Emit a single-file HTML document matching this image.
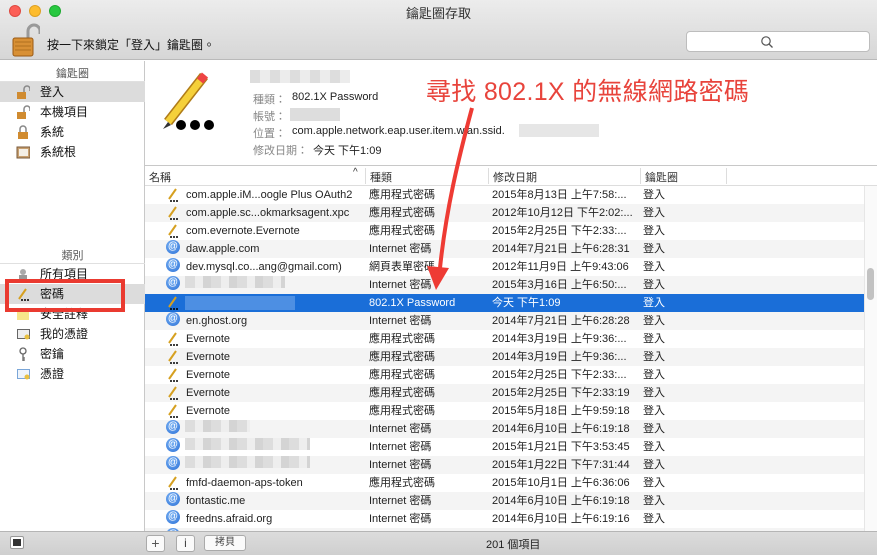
<!DOCTYPE html>
<html><head><meta charset="utf-8"><style>
*{margin:0;padding:0;box-sizing:border-box}
body{width:877px;height:555px;overflow:hidden;font-family:"Liberation Sans","Noto Sans CJK TC",sans-serif;font-size:11px;color:#222;background:#fff;position:relative}
.a{position:absolute}
.tb{left:0;top:0;width:877px;height:60px;background:linear-gradient(#ececec,#d6d6d6);border-bottom:1px solid #b9b9b9}
.dot{width:12px;height:12px;border-radius:50%;top:5px}
.side{left:0;top:61px;width:145px;height:470px;background:#fff;border-right:1px solid #c8c8c8}
.sh{color:#555;text-align:center;width:145px;font-size:11px}
.si{left:0;width:145px;height:20px;line-height:20px;font-size:12px;color:#111}
.si span{position:absolute;left:40px}
.ico{position:absolute;left:16px;top:3px;width:14px;height:14px}
.row{left:145px;width:719px;height:18px;line-height:18px;font-size:11px}
.row div{position:absolute;top:0;white-space:nowrap}
.c1{left:41px}.c2{left:224px}.c3{left:347px}.c4{left:498px}
.at{position:absolute;left:21px;top:2px;width:14px;height:14px;border-radius:50%;background:radial-gradient(circle at 40% 35%,#7cb4f5,#2a6fd6);color:#fff;font-size:10px;line-height:14px;text-align:center}
.blur{position:absolute;left:40px;top:3px;height:12px;background:repeating-linear-gradient(90deg,#ddd 0 10px,#eee 10px 18px,#d4d4d4 18px 26px)}
.ch{color:#333}
</style></head><body>
<div class="a tb"></div>
<div class="a dot" style="left:9px;background:#fc5f57;border:1px solid #de4a42"></div>
<div class="a dot" style="left:29px;background:#fdbc2e;border:1px solid #dea124"></div>
<div class="a dot" style="left:49px;background:#28c840;border:1px solid #1eaa30"></div>
<div class="a" style="left:0;top:3px;width:877px;text-align:center;font-size:13px;color:#333">鑰匙圈存取</div>
<svg class="a" style="left:10px;top:22px" width="30" height="36"><path d="M18 16 V9 a6 6 0 0 1 12 0 V12" fill="none" stroke="#999" stroke-width="3"/><rect x="3" y="16" width="20" height="18" rx="2" fill="#d89035" stroke="#9a5a14"/><path d="M5 20h16M5 24h16M5 28h16" stroke="#b0701f"/></svg>
<div class="a" style="left:47px;top:36px;font-size:12px;color:#111">按一下來鎖定「登入」鑰匙圈。</div>
<div class="a" style="left:686px;top:31px;width:184px;height:21px;background:#fff;border:1px solid #bdbdbd;border-radius:4px"></div>
<svg class="a" style="left:760px;top:35px" width="14" height="14"><circle cx="6" cy="6" r="4.2" fill="none" stroke="#555" stroke-width="1.2"/><path d="M9 9l3.5 3.5" stroke="#555" stroke-width="1.3"/></svg>

<div class="a side"></div>
<div class="a sh" style="top:65px">鑰匙圈</div>
<div class="a" style="left:0;top:81px;width:145px;border-top:1px solid #e0e0e0"></div>
<div class="a si" style="top:82px;background:#dcdcdc"><svg class="ico"><path d="M8 7V4a3 3 0 0 1 6 0v2" fill="none" stroke="#888" stroke-width="1.5"/><rect x="1" y="7" width="9" height="7" fill="#d08b30"/></svg><span>登入</span></div>
<div class="a si" style="top:102px"><svg class="ico"><path d="M8 7V4a3 3 0 0 1 6 0v2" fill="none" stroke="#888" stroke-width="1.5"/><rect x="1" y="7" width="9" height="7" fill="#d08b30"/></svg><span>本機項目</span></div>
<div class="a si" style="top:122px"><svg class="ico"><path d="M4 7V4a3 3 0 0 1 6 0v3" fill="none" stroke="#888" stroke-width="1.5"/><rect x="2" y="7" width="10" height="7" fill="#d08b30"/></svg><span>系統</span></div>
<div class="a si" style="top:142px"><svg class="ico"><rect x="1" y="2" width="13" height="11" fill="#c8a070" stroke="#7a5a3a"/><rect x="3" y="4" width="9" height="7" fill="#f4efe6"/></svg><span>系統根</span></div>
<div class="a sh" style="top:247px">類別</div>
<div class="a" style="left:0;top:263px;width:145px;border-top:1px solid #e0e0e0"></div>
<div class="a si" style="top:264px"><svg class="ico"><circle cx="7" cy="5" r="3" fill="#aaa"/><rect x="3" y="8" width="8" height="6" fill="#999"/></svg><span>所有項目</span></div>
<div class="a si" style="top:284px;background:#dcdcdc"><svg class="ico"><path d="M3 12L10 2" stroke="#d6a020" stroke-width="2"/><circle cx="6" cy="13" r="1" fill="#000"/><circle cx="9" cy="13" r="1" fill="#000"/><circle cx="12" cy="13" r="1" fill="#000"/></svg><span>密碼</span></div>
<div class="a si" style="top:304px"><svg class="ico"><rect x="1" y="2" width="12" height="11" fill="#f7e58a"/></svg><span>安全註釋</span></div>
<div class="a si" style="top:324px"><svg class="ico"><rect x="1" y="2" width="13" height="10" fill="#666"/><rect x="2" y="3" width="11" height="8" fill="#eee"/><circle cx="11" cy="10" r="2.5" fill="#e8c040"/></svg><span>我的憑證</span></div>
<div class="a si" style="top:344px"><svg class="ico"><circle cx="7" cy="4" r="3" fill="none" stroke="#666" stroke-width="1.3"/><path d="M7 7v7M7 11h2M7 13h2" stroke="#666" stroke-width="1.3"/></svg><span>密鑰</span></div>
<div class="a si" style="top:364px"><svg class="ico"><rect x="1" y="2" width="13" height="10" fill="#7aa6d8"/><rect x="2" y="3" width="11" height="8" fill="#eef4fb"/><circle cx="11" cy="10" r="2.5" fill="#e8c040"/></svg><span>憑證</span></div>
<div class="a" style="left:5px;top:279px;width:120px;height:33px;border:4px solid #ea3a30"></div>

<svg class="a" style="left:160px;top:72px" width="60" height="62"><path d="M8 50 L44 4" stroke="#b07c18" stroke-width="10" stroke-linecap="butt"/><path d="M8 50 L44 4" stroke="#f5d03a" stroke-width="7"/><path d="M40 9 L45 3" stroke="#e44" stroke-width="8"/><path d="M3 57 L8 50 L11 53Z" fill="#333"/><circle cx="21" cy="53" r="5" fill="#000"/><circle cx="35" cy="53" r="5" fill="#000"/><circle cx="49" cy="53" r="5" fill="#000"/></svg>
<div class="a" style="left:250px;top:70px;width:100px;height:13px;background:repeating-linear-gradient(90deg,#ddd 0 10px,#ececec 10px 20px)"></div>
<div class="a" style="left:253px;top:91px;color:#888">種類：</div><div class="a" style="left:292px;top:91px">802.1X Password</div>
<div class="a" style="left:253px;top:108px;color:#888">帳號：</div><div class="a" style="left:290px;top:108px;width:50px;height:13px;background:#ddd"></div>
<div class="a" style="left:253px;top:125px;color:#888">位置：</div><div class="a" style="left:292px;top:125px">com.apple.network.eap.user.item.wlan.ssid.</div><div class="a" style="left:519px;top:124px;width:80px;height:13px;background:#e6e6e6"></div>
<div class="a" style="left:253px;top:142px;color:#888">修改日期：</div><div class="a" style="left:313px;top:142px">今天 下午1:09</div>
<div class="a" style="left:426px;top:72px;font-size:25px;color:#e8443c;letter-spacing:0.3px">尋找 802.1X 的無線網路密碼</div>

<div class="a" style="left:145px;top:165px;width:732px;height:21px;border-top:1px solid #c8c8c8;border-bottom:1px solid #ddd;background:#fff"></div>
<div class="a ch" style="left:149px;top:169px">名稱</div><div class="a ch" style="left:353px;top:167px;font-size:10px">^</div>
<div class="a ch" style="left:370px;top:169px">種類</div>
<div class="a ch" style="left:493px;top:169px">修改日期</div>
<div class="a ch" style="left:645px;top:169px">鑰匙圈</div>
<div class="a" style="left:365px;top:168px;height:16px;border-left:1px solid #ddd"></div>
<div class="a" style="left:488px;top:168px;height:16px;border-left:1px solid #ddd"></div>
<div class="a" style="left:640px;top:168px;height:16px;border-left:1px solid #ddd"></div>
<div class="a" style="left:726px;top:168px;height:16px;border-left:1px solid #ddd"></div>

<div id="rows"></div>
<script>
var P='<svg style="position:absolute;left:21px;top:2px" width="14" height="14"><path d="M3 11L10 1" stroke="#d6a020" stroke-width="2"/><circle cx="5" cy="13" r="1" fill="#000"/><circle cx="8" cy="13" r="1" fill="#000"/><circle cx="11" cy="13" r="1" fill="#000"/></svg>';
var A='<div class="at">@</div>';
var d=[[P,'com.apple.iM...oogle Plus OAuth2','應用程式密碼','2015年8月13日 上午7:58:...'],
[P,'com.apple.sc...okmarksagent.xpc','應用程式密碼','2012年10月12日 下午2:02:...'],
[P,'com.evernote.Evernote','應用程式密碼','2015年2月25日 下午2:33:...'],
[A,'daw.apple.com','Internet 密碼','2014年7月21日 上午6:28:31'],
[A,'dev.mysql.co...ang@gmail.com)','網頁表單密碼','2012年11月9日 上午9:43:06'],
[A,'#100','Internet 密碼','2015年3月16日 上午6:50:...'],
[P,'#sel','802.1X Password','今天 下午1:09'],
[A,'en.ghost.org','Internet 密碼','2014年7月21日 上午6:28:28'],
[P,'Evernote','應用程式密碼','2014年3月19日 上午9:36:...'],
[P,'Evernote','應用程式密碼','2014年3月19日 上午9:36:...'],
[P,'Evernote','應用程式密碼','2015年2月25日 下午2:33:...'],
[P,'Evernote','應用程式密碼','2015年2月25日 下午2:33:19'],
[P,'Evernote','應用程式密碼','2015年5月18日 上午9:59:18'],
[A,'#65','Internet 密碼','2014年6月10日 上午6:19:18'],
[A,'#125','Internet 密碼','2015年1月21日 下午3:53:45'],
[A,'#125','Internet 密碼','2015年1月22日 下午7:31:44'],
[P,'fmfd-daemon-aps-token','應用程式密碼','2015年10月1日 上午6:36:06'],
[A,'fontastic.me','Internet 密碼','2014年6月10日 上午6:19:18'],
[A,'freedns.afraid.org','Internet 密碼','2014年6月10日 上午6:19:16'],
[A,'','','']];
var h='';
d.forEach(function(r,i){var y=186+18*i,sel=r[1]=='#sel';
var bg=sel?'#1a6ed8':(i%2?'#f4f4f4':'#fff');var col=sel?'#fff':'#222';
var name=r[1].charAt(0)=='#'?(sel?'<div style="left:40px;top:2px;width:110px;height:14px;background:#4d8fe3"></div>':'<div class="blur" style="width:'+r[1].slice(1)+'px"></div>'):'<div class="c1">'+r[1]+'</div>';
h+='<div class="a row" style="top:'+y+'px;background:'+bg+';color:'+col+'">'+r[0]+name+'<div class="c2">'+r[2]+'</div><div class="c3">'+r[3]+'</div><div class="c4">'+(r[2]?'登入':'')+'</div></div>';});
document.getElementById('rows').innerHTML=h;
</script>
<div class="a" style="left:864px;top:186px;width:13px;height:345px;background:#fafafa;border-left:1px solid #e6e6e6"></div>
<div class="a" style="left:867px;top:268px;width:7px;height:32px;background:#c2c2c2;border-radius:4px"></div>

<svg class="a" style="left:420px;top:100px" width="70" height="200"><path d="M52 8 C38 60 26 110 20 168" fill="none" stroke="#ee3b34" stroke-width="4"/><path d="M7 166 L29 168 L16 190Z" fill="#ee3b34"/></svg>

<div class="a" style="left:0;top:531px;width:877px;height:24px;background:linear-gradient(#dcdcdc,#cfcfcf);border-top:1px solid #b5b5b5"></div>
<div class="a" style="left:10px;top:536px;width:14px;height:13px;border:1px solid #999;background:#fff;border-radius:2px"><div style="margin:2px auto;width:8px;height:7px;background:#333"></div></div>
<div class="a" style="left:146px;top:535px;width:19px;height:17px;border:1px solid #aaa;background:#fafafa;border-radius:3px;text-align:center;line-height:15px;font-size:14px;color:#555">+</div>
<div class="a" style="left:176px;top:535px;width:19px;height:17px;border:1px solid #aaa;background:#fafafa;border-radius:3px;text-align:center;line-height:15px;font-size:12px;color:#444">i</div>
<div class="a" style="left:204px;top:535px;width:42px;height:16px;border:1px solid #aaa;background:#fafafa;border-radius:3px;text-align:center;line-height:14px;font-size:10px;color:#444">拷貝</div>
<div class="a" style="left:486px;top:536px;font-size:11px;color:#222">201 個項目</div>
</body></html>
